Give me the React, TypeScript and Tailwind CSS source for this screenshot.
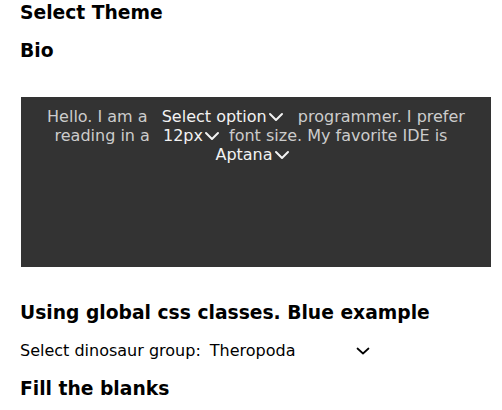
import React from "react";

function Chevron({ className = "" }: { className?: string }) {
  return (
    <svg width="16" height="10" viewBox="0 0 16 10" className={className} fill="none">
      <polyline points="2,2 8,8 14,2" stroke="currentColor" strokeWidth="2" strokeLinecap="round" strokeLinejoin="round" />
    </svg>
  );
}

function InlineSelect({ label, cls }: { label: string; cls: string }) {
  return (
    <span className={`inline-flex items-center text-[#f2f2f2] ${cls}`}>
      <span>{label}</span>
      <Chevron className="ml-[1px] mt-[1px]" />
    </span>
  );
}

export default function App() {
  return (
    <div
      className="pt-[2px] px-[20px] text-black bg-white min-h-[410px]"
      style={{ fontFamily: '"DejaVu Sans", sans-serif' }}
    >
      <h3 className="text-[18.72px] font-bold leading-[22px]">Select Theme</h3>
      <h3 className="text-[18.72px] font-bold leading-[22px] mt-[16px]">Bio</h3>
      <div className="mt-[35px] ml-[1px] w-[470px] h-[170px] bg-[#333333] p-[10px] text-center text-[16px] leading-[19px] text-[#cccccc]">
        Hello. I am a{" "}
        <InlineSelect label="Select option" cls="ml-[9px] mr-[9px]" /> programmer. I prefer reading in a{" "}
        <InlineSelect label="12px" cls="ml-[8px] mr-[4px]" /> font size. My favorite IDE is
        <span className="inline-block w-[10px]"></span>{" "}
        <InlineSelect label="Aptana" cls="ml-[9px] mr-[16px]" />
      </div>
      <h3 className="text-[18.72px] font-bold leading-[22px] mt-[35px]">Using global css classes. Blue example</h3>
      <div className="mt-[17px] flex items-center text-[16px] leading-[19px]">
        <span>Select dinosaur group:</span>
        <span className="ml-[9px] w-[161px] flex items-center justify-between">
          <span>Theropoda</span>
          <svg width="14" height="8" viewBox="0 0 14 8" fill="none" className="mr-[1px]">
            <polyline points="1.5,1.5 7,6.5 12.5,1.5" stroke="currentColor" strokeWidth="1.7" strokeLinecap="round" strokeLinejoin="round" />
          </svg>
        </span>
      </div>
      <h3 className="text-[18.72px] font-bold leading-[22px] mt-[18px]">Fill the blanks</h3>
    </div>
  );
}
